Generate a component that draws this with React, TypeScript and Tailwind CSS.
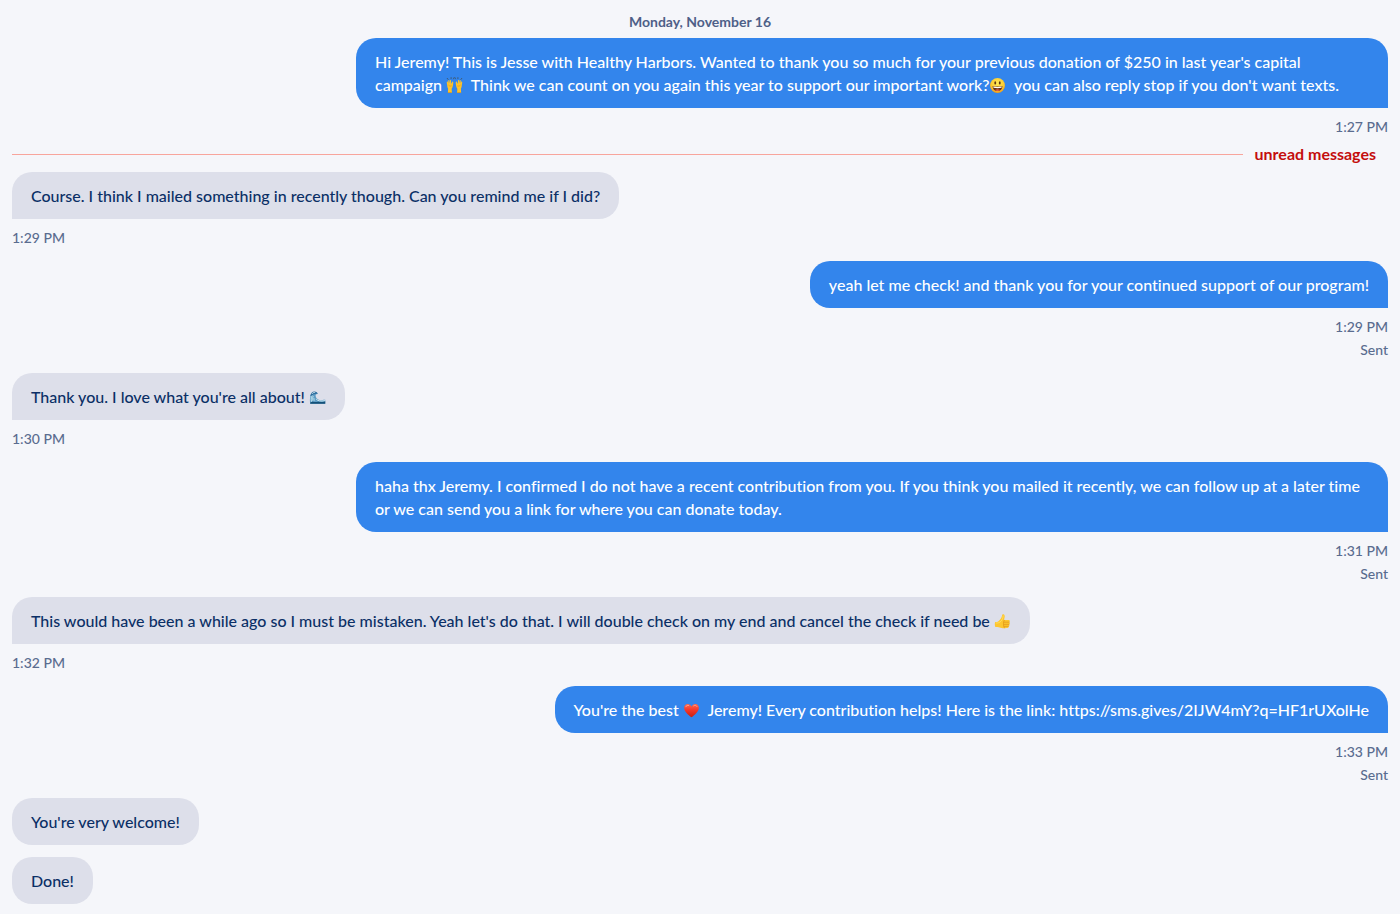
import type { ReactNode } from 'react';
import clsx from 'clsx';

interface Message {

  id: number;

  direction: 'in' | 'out';

  body: ReactNode;

  time?: string;

  status?: string;

}

const Emoji = (props: { label: string, children: ReactNode }) => (
  <svg
    role="img"
    aria-label={props.label}
    viewBox="0 0 18 18"
    className="inline-block size-[17px] align-[-3px]">
    {props.children}
  </svg>
)

const RaisedHands = () => (
  <Emoji label="raising hands">
    <path d="M2.2 2.6 1.3 1.4M5.4 1.8V.6M8 1.9l.5-1.2M15.8 2.6l.9-1.2M12.6 1.8V.6M10 1.9 9.5.7" fill="none" stroke="#3f5a73" strokeLinecap="round" />
    <g fill="#fdc22a">
      <path d="M1.2 8.2c-.3-1.2-.5-2.6-.2-3.1.3-.4.9-.3 1 .2l.3 1.5.2-3c.1-.7 1.1-.7 1.2 0l.1 2.7.5-2.8c.2-.6 1.1-.5 1.1.2l-.2 3 .7-.3c.2-1.1.7-1.9 1.3-1.7.7.2.5 1.2.4 2.2-.2 2.1-.6 4.2-1.6 5.3l.3 4.3H2l.2-4.6C1.4 11.3 1.4 9.5 1.2 8.2Z" />
      <path d="M16.800 8.200c.3-1.200.5-2.600.2-3.100-.3-.4-.9-.3-1 .2l-.3 1.500-.2-3c-.1-.7-1.100-.7-1.200 0l-.1 2.700-.5-2.800c-.2-.6-1.100-.5-1.100.2l.2 3-.7-.3c-.2-1.100-.7-1.900-1.300-1.700-.7.2-.5 1.200-.4 2.200.2 2.100.6 4.200 1.600 5.300l-.3 4.300H16l-.2-4.600c.8-.8.8-2.600 1-3.900Z" />
    </g>
    <path d="M2.6 8.5c1 1.2 2.300 1.400 3.400.8M15.400 8.500c-1 1.200-2.300 1.400-3.400.8M2 16.400h4M12 16.400h4" fill="none" stroke="#e08a12" strokeWidth=".6" />
  </Emoji>
)

const Smiley = () => (
  <Emoji label="grinning face with big eyes">
    <defs>
      <radialGradient id="smiley-skin" cx=".5" cy=".35" r=".65">
        <stop offset="0" stopColor="#ffec5c" />
        <stop offset=".65" stopColor="#fdcb2e" />
        <stop offset="1" stopColor="#ee9a1c" />
      </radialGradient>
    </defs>
    <circle cx="9" cy="9" r="7.9" fill="url(#smiley-skin)" />
    <ellipse cx="6.6" cy="6.3" rx="1" ry="1.7" fill="#5b3410" />
    <ellipse cx="11.4" cy="6.3" rx="1" ry="1.7" fill="#5b3410" />
    <path d="M3.8 9.5q5.2 1.3 10.4 0c0 3.2-2.2 5.400-5.200 5.400S3.800 12.700 3.800 9.500Z" fill="#6b3310" />
    <path d="M4.400 10.100q4.600 1 9.200 0l-.4 1.400q-4.200.8-8.400 0Z" fill="#fff" />
    <path d="M6.300 13.700q2.700-1.700 5.400 0-2.700 2-5.400 0Z" fill="#ee5b4c" />
  </Emoji>
)

const Wave = () => (
  <Emoji label="water wave">
    <path d="M1.3 15.5C.7 11.500.8 7 3.300 4.400 5.300 2.500 8.300 3 9.300 5.400 7.900 4.900 6.900 5.700 7 7.200c.2 2.600 2.400 4.500 5.200 4.600 1.900 0 3.200-.7 5-.5v4.200Z" fill="#5e9cc4" />
    <path d="M2.700 13.500c-.7-2.800-.4-5.600 1-7.400M4.300 12.600c-.7-1.800-.5-3.600.2-5.200M5.800 12.200c-.5-.9-.7-1.700-.6-2.500" fill="none" stroke="#c3e6ef" />
    <path d="M1.300 7.500c.4-3 2.200-4.900 4.500-4.900 1.900 0 3.200 1 3.600 2.900-.8-.9-1.500-.8-2 .1-.6-.8-1.400-.7-1.700.2-.8-.5-1.500-.1-1.700.8-.9-.2-1.400.1-1.700 1Z" fill="#2e6d9e" />
    <path d="M3.200 5.200c.8-1.300 2-1.800 3.300-1.500" fill="none" stroke="#e6f5f9" strokeWidth=".9" />
    <path d="M1.300 14.200c2.500-1.800 4.700.2 7.200-.5 2.700-.7 5.200.8 8.700-.7v2.500H1.300Z" fill="#145078" />
    <path d="M7.500 10.500c1.500 2 4.500 2.800 9.500 1.800" fill="none" stroke="#d3edf3" />
  </Emoji>
)

const ThumbsUp = () => (
  <Emoji label="thumbs up">
    <path d="M1.200 9.600c1.800.2 3.100-.3 4.300-1.600 1.400-1.400 2.600-2.900 2.900-4.900C8.600 1.700 9 1.200 9.800 1.300c1.300.2 1.700 1.500 1.500 3-.2 1.200-.6 2.200-.6 3.200h4.800c1.500 0 1.700 1.800.5 2.200 1.200.3 1.100 2.100-.2 2.300.9.500.6 2-.5 2.100.5.8 0 1.800-1.200 1.900-2.500.3-5 .2-7-.4-1.800-.5-3.200-.8-5.700-.7-.7-1.700-.7-3.600-.2-5.300Z" fill="#fdc62f" />
    <path d="M10.800 9.700h5.200M10.800 12h5M10.700 14.100h4.600M10.800 7.700c-1.200 1.500-1.100 6 .1 8" fill="none" stroke="#dc8f13" strokeWidth=".7" strokeLinecap="round" />
    <path d="M2.200 10.600c2.300.2 3.900-.5 5.200-2 1.300-1.500 2-2.900 2.300-5.600" fill="none" stroke="#ffe36a" strokeWidth=".8" strokeLinecap="round" />
  </Emoji>
)

const Heart = () => (
  <Emoji label="red heart">
    <defs>
      <linearGradient id="heart-fill" x1="0" y1="0" x2="0" y2="1">
        <stop offset="0" stopColor="#ff6a4d" />
        <stop offset=".45" stopColor="#f5372b" />
        <stop offset="1" stopColor="#c9200f" />
      </linearGradient>
    </defs>
    <path d="M9 16.200C5.500 13.500 1.200 10 1.200 6 1.200 3.700 2.900 2 5 2c1.800 0 3.200 1 4 2.700C9.800 3 11.200 2 13 2c2.100 0 3.800 1.700 3.800 4 0 4-4.300 7.500-7.800 10.200Z" fill="url(#heart-fill)" />
    <path d="M3 5c.4-1.200 1.700-1.700 3-1.300M11.300 4c1.200-.8 2.800-.5 3.500.7" fill="none" stroke="#ffb39f" strokeWidth=".8" strokeLinecap="round" />
  </Emoji>
)

const READ: Message[] = [{
  id: 1,
  direction: 'out',
  body: (
    <>
      Hi Jeremy! This is Jesse with Healthy Harbors. Wanted to thank you so much for your previous donation 
      of $250 in last year's capital campaign <RaisedHands />&nbsp; Think we can count on you again this year 
      to support our important work?<Smiley />&nbsp; you can also reply stop if you don't want texts.
    </>
  ),
  time: '1:27 PM'
}];

const UNREAD: Message[] = [{
  id: 2,
  direction: 'in',
  body: 'Course. I think I mailed something in recently though. Can you remind me if I did?',
  time: '1:29 PM'
}, {
  id: 3,
  direction: 'out',
  body: 'yeah let me check! and thank you for your continued support of our program!',
  time: '1:29 PM',
  status: 'Sent'
}, {
  id: 4,
  direction: 'in',
  body: <>Thank you. I love what you're all about! <Wave /></>,
  time: '1:30 PM'
}, {
  id: 5,
  direction: 'out',
  body: 'haha thx Jeremy. I confirmed I do not have a recent contribution from you. If you think you mailed it recently, we can follow up at a later time or we can send you a link for where you can donate today.',
  time: '1:31 PM',
  status: 'Sent'
}, {
  id: 6,
  direction: 'in',
  body: <>This would have been a while ago so I must be mistaken. Yeah let's do that. I will double check on my end and cancel the check if need be <ThumbsUp /></>,
  time: '1:32 PM'
}, {
  id: 7,
  direction: 'out',
  body: (
    <>
      You're the best <Heart />&nbsp; Jeremy! Every contribution helps! Here is the link:{' '}
      <a href="https://sms.gives/2IJW4mY?q=HF1rUXolHe">https://sms.gives/2IJW4mY?q=HF1rUXolHe</a>
    </>
  ),
  time: '1:33 PM',
  status: 'Sent'
}, {
  id: 8,
  direction: 'in',
  body: "You're very welcome!"
}, {
  id: 9,
  direction: 'in',
  body: 'Done!'
}];

const MessageItem = ({ message }: { message: Message }) => {

  const { direction, body, time, status } = message;

  const outgoing = direction === 'out';

  return (
    <li className={clsx('flex flex-col', outgoing ? 'items-end' : 'items-start')}>
      <p
        className={clsx(
          'max-w-3/4 rounded-[20px] px-[19px] py-3 leading-[23px]',
          outgoing ? 'bg-[#3385ec] text-white' : 'bg-[#dddfea] text-[#0b2f66]',
          // Messages with a timestamp get a square corner pointing at it
          time && (outgoing ? 'rounded-br-none' : 'rounded-bl-none')
        )}>
        {body}
      </p>

      {time && (
        <div className="mt-2 flex flex-col items-end gap-px text-sm leading-[22px] text-[#5a6c8f]">
          <time>{time}</time>
          {status && <span>{status}</span>}
        </div>
      )}
    </li>
  )

}

const MessageList = ({ messages }: { messages: Message[] }) => (
  <ol className="flex flex-col gap-3">
    {messages.map(message => (
      <MessageItem key={message.id} message={message} />
    ))}
  </ol>
)

export default function App() {

  return (
    <main className="min-h-screen bg-[#f5f6fa] px-3 pt-3 font-[Lato,sans-serif] text-base font-medium [font-variant-ligatures:none]">
      <h2 className="mb-1.5 text-center text-sm leading-5 font-bold text-[#4e6088]">
        Monday, November 16
      </h2>

      <MessageList messages={READ} />

      <div className="mt-1.5 mb-2 flex items-center gap-3 pr-3 leading-5 font-bold text-[#c40d0d]">
        <div className="h-px grow bg-[#f8a59c]" />
        unread messages
      </div>

      <MessageList messages={UNREAD} />
    </main>
  )

}
